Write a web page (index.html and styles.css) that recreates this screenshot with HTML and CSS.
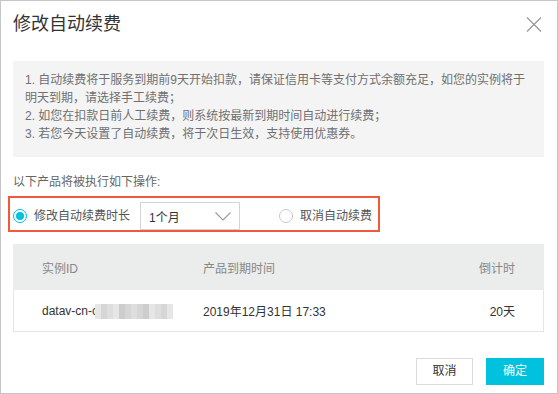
FILE: index.html
```html
<!DOCTYPE html>
<html lang="zh-CN">

<head>
    <meta charset="UTF-8">
    <meta name="viewport" content="width=device-width, initial-scale=1.0">
    <title>修改自动续费</title>
    <link rel="stylesheet" href="styles.css">
</head>

<body>
    <div class="dialog">
        <div class="dialog-head">
            <div class="dialog-title">修改自动续费</div>
            <svg class="close" width="16" height="15" viewBox="0 0 16 15">
                <path d="M1 0.5 L15 14.5 M15 0.5 L1 14.5" stroke="#9a9a9a" stroke-width="1.3" fill="none" />
            </svg>
        </div>

        <div class="notice">
            1. 自动续费将于服务到期前9天开始扣款，请保证信用卡等支付方式余额充足，如您的实例将于<br>
            明天到期，请选择手工续费；<br>
            2. 如您在扣款日前人工续费，则系统按最新到期时间自动进行续费；<br>
            3. 若您今天设置了自动续费，将于次日生效，支持使用优惠券。
        </div>

        <div class="op-label">以下产品将被执行如下操作:</div>

        <div class="options">
            <span class="radio checked"></span>
            <span class="radio-text">修改自动续费时长</span>
            <div class="select">
                <span>1个月</span>
                <svg width="16" height="9" viewBox="0 0 16 9">
                    <polyline points="0.5,0.5 8,8 15.5,0.5" stroke="#9a9a9a" stroke-width="1.1" fill="none" />
                </svg>
            </div>
            <span class="radio second"></span>
            <span class="radio-text">取消自动续费</span>
        </div>

        <div class="table">
            <div class="row head">
                <div class="col-id">实例ID</div>
                <div class="col-date">产品到期时间</div>
                <div class="col-left">倒计时</div>
            </div>
            <div class="row body">
                <div class="col-id">datav-cn-c<span class="mosaic"><i class="m1"></i><i class="m2"></i><i class="m3"></i><i class="m1"></i><i class="m4"></i><i class="m2"></i><i class="m3"></i><i class="m2"></i><i class="m4"></i><i class="m1"></i><i class="m3"></i><i class="m2"></i><i class="m1"></i></span></div>
                <div class="col-date">2019年12月31日 17:33</div>
                <div class="col-left">20天</div>
            </div>
        </div>

        <div class="footer">
            <div class="btn">取消</div>
            <div class="btn primary">确定</div>
        </div>
    </div>
</body>

</html>
```

FILE: styles.css
```css
body {
    margin: 0;
    font-family: "Liberation Sans", "Noto Sans CJK SC", sans-serif;
    font-size: 12px;
    color: #333;
    background: #fff;
}

.dialog {
    width: 558px;
    height: 394px;
    box-sizing: border-box;
    border: 1px solid #c6c6c6;
    padding: 0 13px 0 12px;
}

.dialog-head {
    display: flex;
    justify-content: space-between;
    align-items: center;
    padding-top: 11px;
    height: 24px;
}

.dialog-title {
    font-size: 18px;
    line-height: 24px;
    color: #333;
}

.close {
    margin-right: 2px;
    margin-top: 1px;
}

.notice {
    margin-top: 25px;
    background-color: #f4f4f4;
    padding: 10px 12px 14px 12px;
    line-height: 18px;
    color: #707070;
}

.op-label {
    margin-top: 16px;
    line-height: 18px;
    color: #666;
}

.options {
    margin-top: 5px;
    margin-left: -5px;
    width: 372px;
    height: 36px;
    box-sizing: border-box;
    border: 2px solid #ee5a3b;
    padding: 4px 0 0 3px;
    display: flex;
    align-items: center;
}

.radio {
    width: 14px;
    height: 14px;
    box-sizing: border-box;
    border: 1px solid #c8c8c8;
    border-radius: 50%;
    background: #fff;
    position: relative;
    flex-shrink: 0;
}

.radio.checked {
    border-color: #00c1de;
}

.radio.checked::after {
    content: "";
    position: absolute;
    left: 2px;
    top: 2px;
    width: 8px;
    height: 8px;
    border-radius: 50%;
    background: #00c1de;
}

.radio.second {
    margin-left: 39px;
}

.radio-text {
    margin-left: 7px;
    color: #555;
    line-height: 18px;
}

.select {
    margin-left: 10px;
    width: 100px;
    height: 28px;
    box-sizing: border-box;
    border: 1px solid #d4d4d4;
    display: flex;
    align-items: center;
    justify-content: space-between;
    padding: 0 8px 0 8px;
    color: #333;
}

.table {
    margin-top: 12px;
}

.row {
    display: flex;
    align-items: center;
    padding: 0 29px;
}

.row.head {
    height: 46px;
    background-color: #ebecec;
    color: #888;
}

.row.body {
    height: 41px;
    border: 1px solid #e6e6e6;
    border-top: none;
    padding: 0 28px;
    color: #333;
}

.col-id {
    width: 161px;
    display: flex;
    align-items: center;
}

.col-date {
    flex: 1;
}

.col-left {
    text-align: right;
}

.mosaic {
    display: inline-flex;
    margin-left: -3px;
    height: 15px;
    margin-top: 1px;
}

.mosaic i {
    display: block;
    width: 6px;
    height: 15px;
}

.mosaic .m1 { background: #e6e6e6; }
.mosaic .m2 { background: #d6d6d6; }
.mosaic .m3 { background: #dedede; }
.mosaic .m4 { background: #cdcdcd; }

.footer {
    margin-top: 26px;
    display: flex;
    justify-content: flex-end;
    gap: 13px;
}

.btn {
    width: 57px;
    height: 27px;
    box-sizing: border-box;
    border: 1px solid #dcdcdc;
    text-align: center;
    line-height: 25px;
    color: #333;
    background: #fff;
}

.btn.primary {
    width: 58px;
    border-color: #00c1de;
    background-color: #00c1de;
    color: #fff;
}
```
